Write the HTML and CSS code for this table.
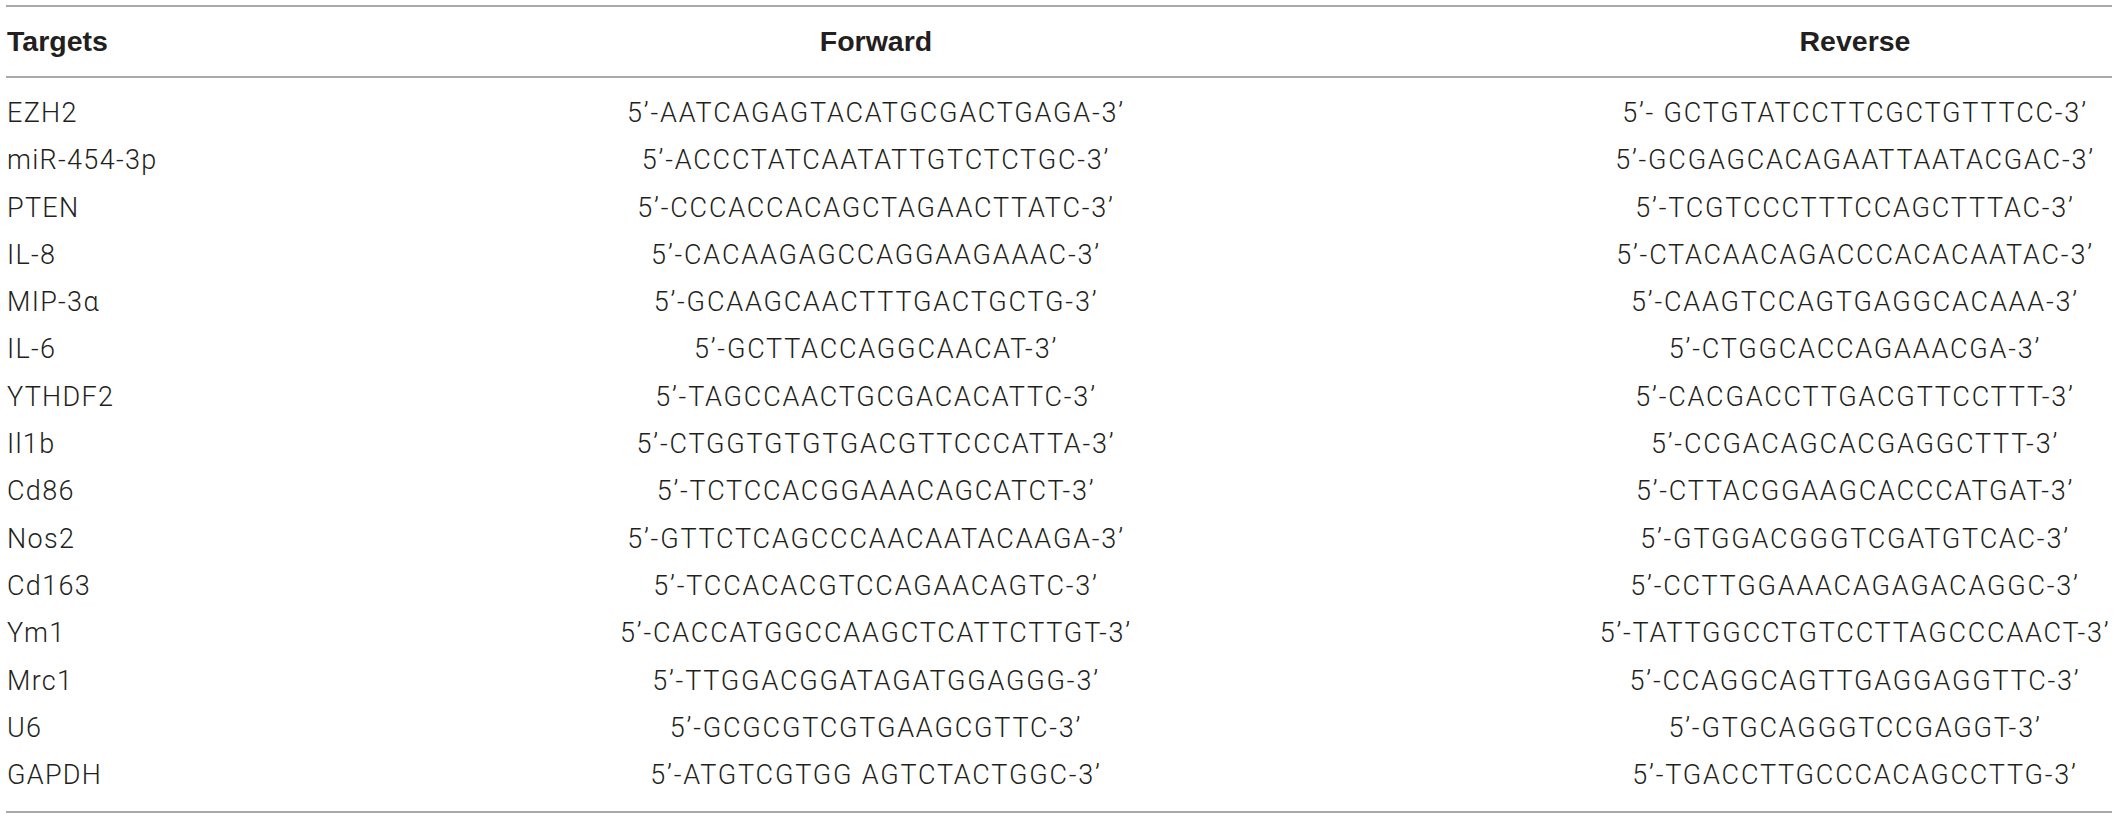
FILE: index.html
```html
<!DOCTYPE html>
<html lang="en">
<head>
<meta charset="utf-8">
<title>Primer sequences</title>
<link rel="stylesheet" href="styles.css">
</head>
<body>
<table class="primers">
  <colgroup>
    <col class="col-target">
    <col class="col-fwd">
    <col class="col-rev">
  </colgroup>
  <thead>
    <tr>
      <th class="h-target">Targets</th>
      <th>Forward</th>
      <th>Reverse</th>
    </tr>
  </thead>
  <tbody>
    <tr><td class="target">EZH2</td><td>5’-AATCAGAGTACATGCGACTGAGA-3’</td><td>5’- GCTGTATCCTTCGCTGTTTCC-3’</td></tr>
    <tr><td class="target">miR-454-3p</td><td>5’-ACCCTATCAATATTGTCTCTGC-3’</td><td>5’-GCGAGCACAGAATTAATACGAC-3’</td></tr>
    <tr><td class="target">PTEN</td><td>5’-CCCACCACAGCTAGAACTTATC-3’</td><td>5’-TCGTCCCTTTCCAGCTTTAC-3’</td></tr>
    <tr><td class="target">IL-8</td><td>5’-CACAAGAGCCAGGAAGAAAC-3’</td><td>5’-CTACAACAGACCCACACAATAC-3’</td></tr>
    <tr><td class="target">MIP-3α</td><td>5’-GCAAGCAACTTTGACTGCTG-3’</td><td>5’-CAAGTCCAGTGAGGCACAAA-3’</td></tr>
    <tr><td class="target">IL-6</td><td>5’-GCTTACCAGGCAACAT-3’</td><td>5’-CTGGCACCAGAAACGA-3’</td></tr>
    <tr><td class="target">YTHDF2</td><td>5’-TAGCCAACTGCGACACATTC-3’</td><td>5’-CACGACCTTGACGTTCCTTT-3’</td></tr>
    <tr><td class="target">Il1b</td><td>5’-CTGGTGTGTGACGTTCCCATTA-3’</td><td>5’-CCGACAGCACGAGGCTTT-3’</td></tr>
    <tr><td class="target">Cd86</td><td>5’-TCTCCACGGAAACAGCATCT-3’</td><td>5’-CTTACGGAAGCACCCATGAT-3’</td></tr>
    <tr><td class="target">Nos2</td><td>5’-GTTCTCAGCCCAACAATACAAGA-3’</td><td>5’-GTGGACGGGTCGATGTCAC-3’</td></tr>
    <tr><td class="target">Cd163</td><td>5’-TCCACACGTCCAGAACAGTC-3’</td><td>5’-CCTTGGAAACAGAGACAGGC-3’</td></tr>
    <tr><td class="target">Ym1</td><td>5’-CACCATGGCCAAGCTCATTCTTGT-3’</td><td>5’-TATTGGCCTGTCCTTAGCCCAACT-3’</td></tr>
    <tr><td class="target">Mrc1</td><td>5’-TTGGACGGATAGATGGAGGG-3’</td><td>5’-CCAGGCAGTTGAGGAGGTTC-3’</td></tr>
    <tr><td class="target">U6</td><td>5’-GCGCGTCGTGAAGCGTTC-3’</td><td>5’-GTGCAGGGTCCGAGGT-3’</td></tr>
    <tr><td class="target">GAPDH</td><td>5’-ATGTCGTGG AGTCTACTGGC-3’</td><td>5’-TGACCTTGCCCACAGCCTTG-3’</td></tr>
  </tbody>
</table>
</body>
</html>
```
FILE: styles.css
```css
html, body {
  margin: 0;
  padding: 0;
  background: #ffffff;
}

body {
  padding: 5px 0 0 6px;
  font-family: "Liberation Sans", Arial, Helvetica, sans-serif;
  color: #231f20;
}

.primers {
  border-collapse: collapse;
  table-layout: fixed;
  width: 2106px;
}

.col-target { width: 148px; }
.col-fwd { width: 1444px; }
.col-rev { width: 514px; }

.primers th {
  height: 69px;
  padding: 0;
  font-size: 28.5px;
  font-weight: bold;
  text-align: center;
  border-top: 2px solid #a9a9a9;
  border-bottom: 2px solid #a9a9a9;
  white-space: nowrap;
}

.primers th.h-target {
  text-align: left;
  padding-left: 1px;
}

.primers td {
  padding: 0;
  height: 47.3px;
  line-height: 47.3px;
  font-family: Roboto, "Liberation Sans", Arial, sans-serif;
  font-weight: 300;
  font-size: 27px;
  letter-spacing: 1.8px;
  text-align: center;
  white-space: nowrap;
  vertical-align: middle;
}

.primers td.target {
  text-align: left;
  padding-left: 1px;
  letter-spacing: 1.3px;
}

.primers tbody tr:first-child td {
  padding-top: 12px;
}

.primers tbody tr:last-child td {
  padding-bottom: 12px;
  border-bottom: 2px solid #a9a9a9;
}
```
